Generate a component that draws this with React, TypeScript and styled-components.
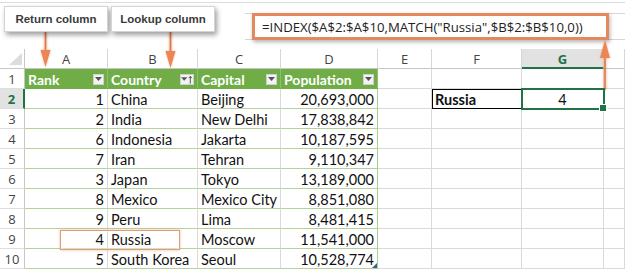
import React from "react";
import styled, { createGlobalStyle, css } from "styled-components";

const GlobalStyle = createGlobalStyle`
  html, body {
    margin: 0;
    padding: 0;
    background: #ffffff;
    overflow: hidden;
  }
  * {
    box-sizing: border-box;
  }
`;

// H is only a sliver at the right edge, its letter is off-screen
const COLUMNS = ["A", "B", "C", "D", "E", "F", "G", ""];
const HEADERS = ["Rank", "Country", "Capital", "Population"];

const ROWS: [number, string, string, string][] = [
  [1, "China", "Beijing", "20,693,000"],
  [2, "India", "New Delhi", "17,838,842"],
  [6, "Indonesia", "Jakarta", "10,187,595"],
  [7, "Iran", "Tehran", "9,110,347"],
  [3, "Japan", "Tokyo", "13,189,000"],
  [8, "Mexico", "Mexico City", "8,851,080"],
  [9, "Peru", "Lima", "8,481,415"],
  [4, "Russia", "Moscow", "11,541,000"],
  [5, "South Korea", "Seoul", "10,528,774"],
];

const ORANGE = "#ec8654";
const GREEN = "#217346";

export default function App() {
  return (
    <>
      <GlobalStyle />
      <Sheet>
        {/* Callouts + formula bar */}
        <Ribbon>
          <Callout>Return column</Callout>
          <Callout>Lookup column</Callout>
          <FormulaStrip>
            <FormulaBox>=INDEX($A$2:$A$10,MATCH("Russia",$B$2:$B$10,0))</FormulaBox>
          </FormulaStrip>
        </Ribbon>

        {/* Worksheet */}
        <Grid>
          <Corner>
            <svg width="13" height="12" viewBox="0 0 13 12">
              <polygon points="13,0 13,12 0,12" fill="#dcdcdc" />
            </svg>
          </Corner>
          {COLUMNS.map((c, i) => (
            <ColHead key={i} $selected={c === "G"}>
              {c}
            </ColHead>
          ))}

          <RowHead>1</RowHead>
          {HEADERS.map((h, i) => (
            <HeadCell key={h}>
              <span>{h}</span>
              <FilterButton $wide={i === 1}>
                <svg width="7" height="4" viewBox="0 0 7 4">
                  <polygon points="0,0 7,0 3.5,4" fill="#555" />
                </svg>
                {i === 1 && (
                  <svg width="5" height="9" viewBox="0 0 5 9">
                    <path d="M2.5 9V1.5M0.8 3L2.5 1L4.2 3" stroke="#444" strokeWidth="1" fill="none" />
                  </svg>
                )}
              </FilterButton>
            </HeadCell>
          ))}
          <Cell />
          <Cell />
          <Cell />
          <Cell />

          {ROWS.map(([rank, country, capital, pop], i) => {
            const row = i + 2;
            return (
              <React.Fragment key={row}>
                <RowHead $selected={row === 2}>{row}</RowHead>
                <Cell $table $align="right">{rank}</Cell>
                <Cell $table>{country}</Cell>
                <Cell $table>{capital}</Cell>
                <Cell $table $edge $align="right">
                  {pop}
                  {row === 10 && <ResizeGrip />}
                </Cell>
                <Cell />
                <Cell $boxed={row === 2} $bold>
                  {row === 2 ? "Russia" : ""}
                </Cell>
                <Cell $active={row === 2} $align="center">
                  {row === 2 ? "4" : ""}
                </Cell>
                <Cell />
              </React.Fragment>
            );
          })}
        </Grid>

        {/* Annotation overlays */}
        <Highlight />
        <Arrows width="625" height="269" viewBox="0 0 625 269">
          <defs>
            <filter id="glow" x="-50%" y="-50%" width="200%" height="200%">
              <feGaussianBlur stdDeviation="1.3" />
            </filter>
          </defs>
          {[
            { x: 45.5, y1: 32, y2: 67, down: true },
            { x: 170.5, y1: 32, y2: 68, down: true },
            { x: 605, y1: 90, y2: 40, down: false },
          ].map((a, i) => {
            const head = a.down ? a.y2 - 17 : a.y2 + 18;
            const pts = `${a.x - 5},${head} ${a.x + 5},${head} ${a.x},${a.y2}`;
            return (
              <g key={i}>
                <g filter="url(#glow)" opacity="0.7">
                  <line x1={a.x} y1={a.y1} x2={a.x} y2={head} stroke="#f3a27a" strokeWidth="3" />
                  <polygon points={pts} fill="#f3a27a" />
                </g>
                <line x1={a.x} y1={a.y1} x2={a.x} y2={head} stroke="#d77c52" strokeWidth="1.6" />
                <polygon points={pts} fill={ORANGE} />
              </g>
            );
          })}
        </Arrows>
      </Sheet>
    </>
  );
}

/* ── Page ── */
const Sheet = styled.div`
  position: relative;
  width: 625px;
  height: 269px;
  overflow: hidden;
  background: #ffffff;
`;

/* ── Ribbon: callouts + formula bar ── */
const Ribbon = styled.div`
  display: flex;
  align-items: flex-start;
  gap: 3px;
  height: 47px;
  margin-top: 2px;
  padding-left: 4px;
  border-top: 1px solid #dcdcdc;
`;

const Callout = styled.div`
  display: flex;
  align-items: center;
  justify-content: center;
  width: 104px;
  height: 26px;
  margin-top: 3px;
  background: #ffffff;
  border: 1px solid #d4d4d4;
  box-shadow: 2px 3px 5px rgba(0, 0, 0, 0.38);
  font-family: "Liberation Sans", Arial, sans-serif;
  font-weight: 700;
  font-size: 11.5px;
  color: #3b3b3b;
  white-space: nowrap;
  position: relative;
  z-index: 1;
`;

const FormulaStrip = styled.div`
  flex: 1;
  height: 27px;
  margin-top: 10px;
  margin-left: 27px;
  border-top: 1px solid #d6d6d6;
  border-bottom: 1px solid #d6d6d6;
`;

const FormulaBox = styled.div`
  width: 357px;
  height: 27px;
  margin: -1px 0 0 7px;
  padding: 0 0 0 7px;
  display: flex;
  align-items: center;
  background: #ffffff;
  border: 3px solid #e4895e;
  box-shadow: 1px 2px 4px rgba(0, 0, 0, 0.3);
  font-family: "Open Sans", sans-serif;
  font-size: 13.2px;
  color: #222222;
  white-space: nowrap;
`;

/* ── Worksheet grid ── */
const Grid = styled.div`
  display: grid;
  grid-template-columns: 25px 83px 90px 83px 97px 54px 90px 82px 21px;
  grid-auto-rows: 20px;
  font-family: Lato, "Open Sans", sans-serif;
  font-size: 14.5px;
  color: #111111;
`;

const headerText = css`
  display: flex;
  align-items: center;
  justify-content: center;
  font-family: "Open Sans", sans-serif;
  font-size: 13px;
  color: #444444;
  background: #ffffff;
`;

const Corner = styled.div`
  display: flex;
  align-items: flex-end;
  justify-content: flex-end;
  padding: 0 2px 3px 0;
  border-right: 1px solid #c6c6c6;
  border-bottom: 1px solid #c6c6c6;
`;

const ColHead = styled.div<{ $selected?: boolean }>`
  ${headerText}
  padding-top: 1px;
  border-right: 1px solid #d6d6d6;
  border-bottom: 1px solid #c6c6c6;
  ${({ $selected }) =>
    $selected &&
    css`
      background: #e2e2e2;
      color: ${GREEN};
      font-weight: 700;
      border-bottom: 2px solid ${GREEN};
    `}
`;

const RowHead = styled.div<{ $selected?: boolean }>`
  ${headerText}
  border-right: 1px solid #c6c6c6;
  border-bottom: 1px solid #dedede;
  ${({ $selected }) =>
    $selected &&
    css`
      background: #e2e2e2;
      color: ${GREEN};
      font-weight: 700;
      border-right: 2px solid ${GREEN};
    `}
`;

const HeadCell = styled.div`
  display: flex;
  align-items: center;
  justify-content: space-between;
  padding: 1px 3px 0 3px;
  background: #70ad47;
  color: #ffffff;
  font-size: 14px;
  font-weight: 700;
  border-right: 1px solid #8fbf6e;
  border-bottom: 1px solid #70ad47;
`;

const FilterButton = styled.span<{ $wide?: boolean }>`
  display: flex;
  align-items: center;
  justify-content: center;
  gap: 1px;
  width: ${({ $wide }) => ($wide ? "14px" : "11px")};
  height: 11px;
  background: #f3f3f3;
  border: 1px solid #d0d0d0;
`;

const Cell = styled.div<{
  $table?: boolean;
  $edge?: boolean;
  $align?: "left" | "right" | "center";
  $bold?: boolean;
  $boxed?: boolean;
  $active?: boolean;
}>`
  position: relative;
  display: flex;
  align-items: center;
  justify-content: ${({ $align }) =>
    $align === "right" ? "flex-end" : $align === "center" ? "center" : "flex-start"};
  padding: 1px 3px 0 3px;
  white-space: nowrap;
  font-weight: ${({ $bold }) => ($bold ? 700 : 400)};
  border-right: 1px solid ${({ $edge }) => ($edge ? "#a9cf8c" : "#dadada")};
  border-bottom: 1px solid ${({ $table }) => ($table ? "#b3d39b" : "#dadada")};

  ${({ $boxed }) =>
    $boxed &&
    css`
      outline: 1px solid #000000;
      outline-offset: -1px;
    `}

  ${({ $active }) =>
    $active &&
    css`
      outline: 2px solid ${GREEN};
      outline-offset: -1px;
      z-index: 1;
      &::after {
        content: "";
        position: absolute;
        right: -4px;
        bottom: -4px;
        width: 6px;
        height: 6px;
        background: ${GREEN};
        border: 1px solid #ffffff;
      }
    `}
`;

const ResizeGrip = styled.span`
  position: absolute;
  right: 0;
  bottom: 0;
  width: 0;
  height: 0;
  border-left: 5px solid transparent;
  border-bottom: 5px solid #3f5f86;
`;

/* ── Overlays ── */
const Highlight = styled.div`
  position: absolute;
  left: 60px;
  top: 230px;
  width: 120px;
  height: 20px;
  border: 1.5px solid #e39a78;
  box-shadow: 0 0 3px rgba(236, 134, 84, 0.55), inset 0 0 5px rgba(255, 255, 255, 0.9);
  pointer-events: none;
`;

const Arrows = styled.svg`
  position: absolute;
  left: 0;
  top: 0;
  pointer-events: none;
`;
